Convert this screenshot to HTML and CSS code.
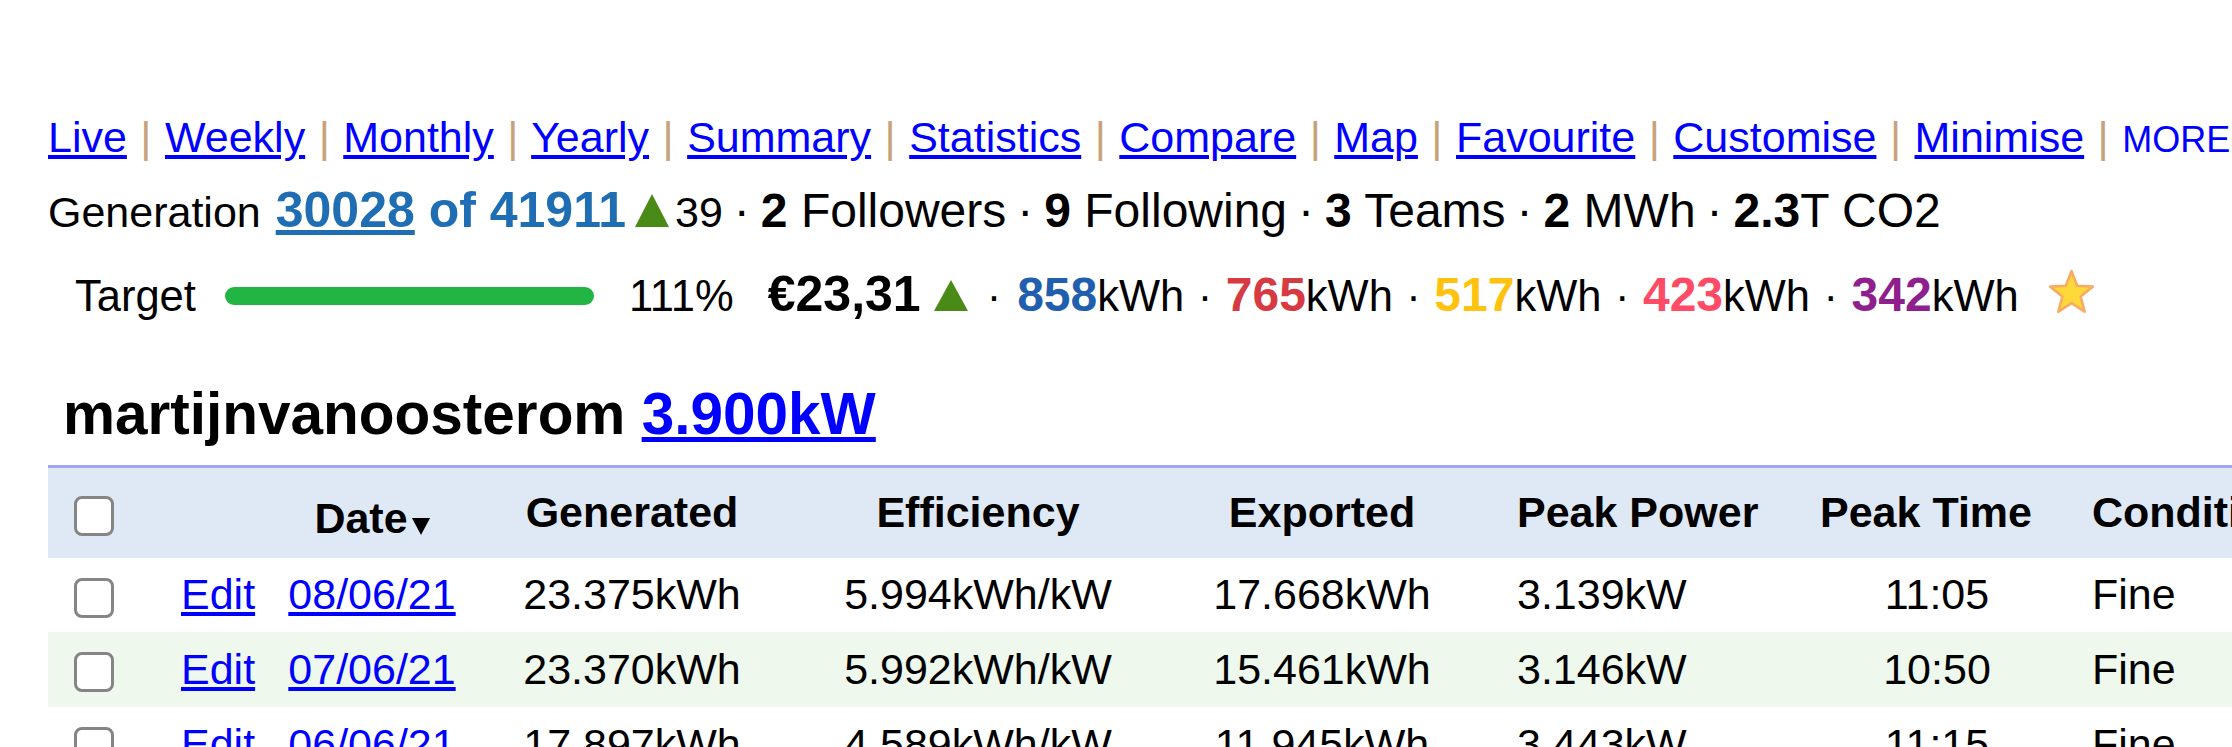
FILE: index.html
```html
<!DOCTYPE html>
<html>
<head>
<meta charset="utf-8">
<title>martijnvanoosterom</title>
<link rel="stylesheet" href="styles.css">
</head>
<body>
<div class="page">
  <div class="nav"><a href="#">Live</a> <span class="bar">|</span> <a href="#">Weekly</a> <span class="bar">|</span> <a href="#">Monthly</a> <span class="bar">|</span> <a href="#">Yearly</a> <span class="bar">|</span> <a href="#">Summary</a> <span class="bar">|</span> <a href="#">Statistics</a> <span class="bar">|</span> <a href="#">Compare</a> <span class="bar">|</span> <a href="#">Map</a> <span class="bar">|</span> <a href="#">Favourite</a> <span class="bar">|</span> <a href="#">Customise</a> <span class="bar">|</span> <a href="#">Minimise</a> <span class="bar">|</span> <span class="more">MORE</span></div>

  <div class="gen"><span class="small">Generation </span><a class="rank rank-link" href="#">30028</a><b class="rank"> of 41911</b><svg class="tri-g" viewBox="0 0 34 33"><polygon points="17,0 34,33 0,33" fill="#4a8a16"/></svg><span class="small">39</span><span class="gsep">·</span><b>2</b> Followers<span class="gsep">·</span><b>9</b> Following<span class="gsep">·</span><b>3</b> Teams<span class="gsep">·</span><b>2</b> MWh<span class="gsep">·</span><b>2.3</b>T CO2</div>

  <div class="target"><span class="tlabel">Target</span><span class="progress"></span><span class="pct">111%</span><b class="money">€23,31</b><svg class="tri-t" viewBox="0 0 34 31"><polygon points="17,0 34,31 0,31" fill="#4a8a16"/></svg><span class="sep sep-first">·</span><b class="big c-blue">858</b>kWh<span class="sep">·</span><b class="big c-red">765</b>kWh<span class="sep">·</span><b class="big c-yellow">517</b>kWh<span class="sep">·</span><b class="big c-pink">423</b>kWh<span class="sep">·</span><b class="big c-purple">342</b>kWh<svg class="star" viewBox="0 0 46 44"><polygon points="23,2 28.3,15.7 43,16.5 31.6,25.8 35.3,40 23,32 10.7,40 14.4,25.8 3,16.5 17.7,15.7" fill="#ffd83a" stroke="#f6ac62" stroke-width="2.5" stroke-linejoin="round"/></svg></div>

  <h1 class="name">martijnvanoosterom <a href="#">3.900kW</a></h1>

  <table class="log">
    <colgroup>
      <col class="w-cb"><col class="w-edit"><col class="w-date"><col class="w-gen"><col class="w-eff"><col class="w-exp"><col class="w-pp"><col class="w-pt"><col class="w-cond">
    </colgroup>
    <thead>
      <tr>
        <th class="c-cb"><input class="cb" type="checkbox"></th>
        <th></th>
        <th class="c-mid date-h">Date<svg class="down" viewBox="0 0 18 17"><polygon points="0,0 18,0 9,17" fill="#000"/></svg></th>
        <th class="c-mid">Generated</th>
        <th class="c-mid">Efficiency</th>
        <th class="c-mid">Exported</th>
        <th class="c-pp">Peak Power</th>
        <th class="c-mid c-pt">Peak Time</th>
        <th class="c-cond">Conditions</th>
      </tr>
    </thead>
    <tbody>
      <tr>
        <td class="c-cb"><input class="cb" type="checkbox"></td>
        <td class="c-edit"><a href="#">Edit</a></td>
        <td class="c-mid"><a href="#">08/06/21</a></td>
        <td class="c-mid">23.375kWh</td>
        <td class="c-mid">5.994kWh/kW</td>
        <td class="c-mid">17.668kWh</td>
        <td class="c-pp">3.139kW</td>
        <td class="c-mid c-pt">11:05</td>
        <td class="c-cond">Fine</td>
      </tr>
      <tr class="alt">
        <td class="c-cb"><input class="cb" type="checkbox"></td>
        <td class="c-edit"><a href="#">Edit</a></td>
        <td class="c-mid"><a href="#">07/06/21</a></td>
        <td class="c-mid">23.370kWh</td>
        <td class="c-mid">5.992kWh/kW</td>
        <td class="c-mid">15.461kWh</td>
        <td class="c-pp">3.146kW</td>
        <td class="c-mid c-pt">10:50</td>
        <td class="c-cond">Fine</td>
      </tr>
      <tr>
        <td class="c-cb"><input class="cb" type="checkbox"></td>
        <td class="c-edit"><a href="#">Edit</a></td>
        <td class="c-mid"><a href="#">06/06/21</a></td>
        <td class="c-mid">17.897kWh</td>
        <td class="c-mid">4.589kWh/kW</td>
        <td class="c-mid">11.945kWh</td>
        <td class="c-pp">3.443kW</td>
        <td class="c-mid c-pt">11:15</td>
        <td class="c-cond">Fine</td>
      </tr>
    </tbody>
  </table>
</div>
</body>
</html>
```

FILE: styles.css
```css
html, body {
  margin: 0;
  padding: 0;
  overflow: hidden;
  background: #ffffff;
}

body {
  font-family: "Liberation Sans", Arial, sans-serif;
  color: #000000;
}

a {
  color: #0000ff;
  text-decoration: underline;
}

.page {
  padding: 113px 0 0 48px;
}

/* navigation */
.nav {
  font-size: 43px;
  line-height: 48px;
  white-space: nowrap;
}

.nav .bar {
  color: #c6a37c;
  margin: 0 1.5px;
}

.nav .more {
  color: #0000ff;
  font-size: 36px;
}

/* generation line */
.gen {
  margin-top: 17px;
  font-size: 48px;
  line-height: 60px;
  white-space: nowrap;
}

.gen .small {
  font-size: 43px;
}

.gen .rank {
  color: #1f6eb4;
  font-weight: bold;
  font-size: 50px;
  line-height: 1;
}

.gen .rank-link {
  margin-left: 3px;
}

.gsep {
  margin: 0 11px;
}

.tri-g {
  width: 34px;
  height: 33px;
  margin: 0 6px 0 9px;
  vertical-align: baseline;
}

/* target line */
.target {
  margin-top: 24px;
  padding-left: 27px;
  font-size: 43.5px;
  line-height: 60px;
  white-space: nowrap;
}

.progress {
  display: inline-block;
  width: 369px;
  height: 18px;
  margin-left: 29px;
  border-radius: 9px;
  background: #22b544;
  vertical-align: 6px;
}

.pct {
  margin-left: 35px;
}

.money {
  margin-left: 34px;
  font-size: 50px;
  line-height: 1;
}

.big {
  font-size: 48px;
  line-height: 1;
}

.tri-t {
  width: 34px;
  height: 31px;
  margin-left: 13px;
  vertical-align: baseline;
}

.sep {
  margin: 0 13.5px;
}

.sep-first {
  margin: 0 16px 0 19px;
}

.c-blue { color: #1f5fae; }
.c-red { color: #d63a42; }
.c-yellow { color: #ffc20e; }
.c-pink { color: #ff4b66; }
.c-purple { color: #8e1f8c; }

.star {
  width: 49px;
  height: 47px;
  margin-left: 28px;
  vertical-align: -5px;
}

/* heading */
.name {
  margin: 53px 0 0 0;
  padding-left: 15px;
  font-size: 58.5px;
  line-height: 70px;
  font-weight: bold;
  white-space: nowrap;
}

/* table */
.log {
  margin-top: 16px;
  width: 2352px;
  table-layout: fixed;
  border-collapse: collapse;
  border-top: 3px solid #a3a3f6;
  font-size: 43px;
}

.w-cb { width: 102px; }
.w-edit { width: 120px; }
.w-date { width: 204px; }
.w-gen { width: 316px; }
.w-eff { width: 376px; }
.w-exp { width: 312px; }
.w-pp { width: 322px; }
.w-pt { width: 260px; }
.w-cond { width: 340px; }

.log th,
.log td {
  padding: 0;
  white-space: nowrap;
  overflow: hidden;
  vertical-align: middle;
}

.log thead tr {
  height: 91px;
  background: #dfe9f6;
}

.log th {
  font-weight: bold;
}

.log tbody tr {
  height: 75px;
}

.log tbody tr:first-child {
  height: 74px;
}

.log tr.alt {
  background: #eef8ec;
}

.c-cb { text-align: left; padding-left: 26px !important; }
.c-edit { text-align: left; padding-left: 31px !important; }
.c-mid { text-align: center; }
.c-pp { text-align: left; padding-left: 39px !important; }
.c-cond { text-align: left; padding-left: 32px !important; }

.log th.c-pt { padding-right: 8px; }
.log td.c-pt { padding-left: 14px; }

.date-h {
  padding-top: 12px !important;
}

.down {
  width: 18px;
  height: 17px;
  margin-left: 4px;
  vertical-align: -2px;
}

.cb {
  -webkit-appearance: none;
  appearance: none;
  box-sizing: border-box;
  display: inline-block;
  width: 40px;
  height: 40px;
  margin: 0;
  border: 3px solid #858585;
  border-radius: 8px;
  background: #ffffff;
  vertical-align: middle;
}
```
